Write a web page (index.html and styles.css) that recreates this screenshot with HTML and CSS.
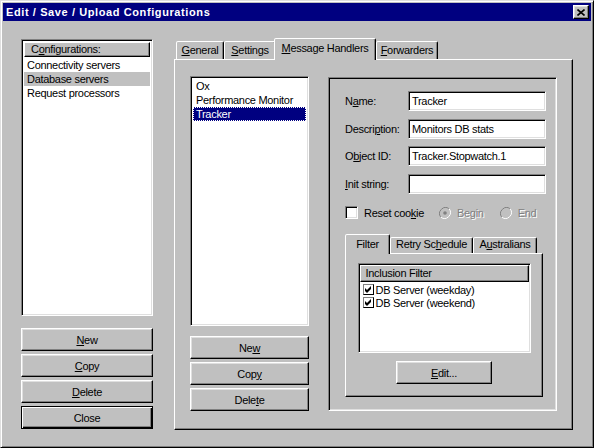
FILE: index.html
```html
<!DOCTYPE html>
<html>
<head>
<meta charset="utf-8">
<link rel="stylesheet" href="styles.css">
</head>
<body>
<div class="window">
  <div class="titlebar">
    <span class="title">Edit / Save / Upload Configurations</span>
    <div class="close"><svg width="8" height="7" viewBox="0 0 8 7"><path d="M0.5 0.5 L7.5 6.5 M7.5 0.5 L0.5 6.5" stroke="#000" stroke-width="1.6" fill="none"/></svg></div>
  </div>
  <div class="main">
    <div class="leftcol">
      <div class="listbox cfg">
        <div class="lb-header">C<u>o</u>nfigurations:</div>
        <div class="item first">Connectivity servers</div>
        <div class="item gray">Database servers</div>
        <div class="item">Request processors</div>
      </div>
      <div class="btncol leftbtns">
        <div class="btn"><span><u>N</u>ew</span></div>
        <div class="btn"><span><u>C</u>opy</span></div>
        <div class="btn"><span><u>D</u>elete</span></div>
        <div class="btn default"><span>Close</span></div>
      </div>
    </div>
    <div class="tabctl">
      <div class="tabs">
        <div class="tab w-general"><u>G</u>eneral</div>
        <div class="tab w-settings"><u>S</u>ettings</div>
        <div class="tab active w-mh"><u>M</u>essage Handlers</div>
        <div class="tab w-fw"><u>F</u>orwarders</div>
      </div>
      <div class="panel">
        <div class="midcol">
          <div class="listbox hlist">
            <div class="item">Ox</div>
            <div class="item">Performance Monitor</div>
            <div class="item sel">Tracker</div>
          </div>
          <div class="btncol midbtns">
            <div class="btn"><span>Ne<u>w</u></span></div>
            <div class="btn"><span>Cop<u>y</u></span></div>
            <div class="btn"><span>Dele<u>t</u>e</span></div>
          </div>
        </div>
        <div class="group">
          <div class="frow r1"><span class="flabel">N<u>a</u>me:</span><div class="field">Tracker</div></div>
          <div class="frow r2"><span class="flabel">Descri<u>p</u>tion:</span><div class="field">Monitors DB stats</div></div>
          <div class="frow r3"><span class="flabel">O<u>b</u>ject ID:</span><div class="field">Tracker.Stopwatch.1</div></div>
          <div class="frow r4"><span class="flabel"><u>I</u>nit string:</span><div class="field"></div></div>
          <div class="optrow">
            <div class="check"></div>
            <span class="optlabel">Reset coo<u>k</u>ie</span>
            <svg class="radio rbegin" width="12" height="12" viewBox="0 0 12 12"><path d="M10.2 1.8 A6 6 0 0 0 1.8 10.2" stroke="#808080" fill="none"/><path d="M1.8 10.2 A6 6 0 0 0 10.2 1.8" stroke="#fff" fill="none"/><circle cx="6" cy="6" r="4.5" fill="#c0c0c0"/><circle cx="6" cy="6" r="1.8" fill="#808080"/></svg>
            <span class="disabled">Begin</span>
            <svg class="radio rend" width="12" height="12" viewBox="0 0 12 12"><path d="M10.2 1.8 A6 6 0 0 0 1.8 10.2" stroke="#808080" fill="none"/><path d="M1.8 10.2 A6 6 0 0 0 10.2 1.8" stroke="#fff" fill="none"/><circle cx="6" cy="6" r="4.5" fill="#c0c0c0"/></svg>
            <span class="disabled">End</span>
          </div>
          <div class="subtabctl">
            <div class="stabs">
              <div class="stab active w-filter">Filter</div>
              <div class="stab w-retry">Retry Sc<u>h</u>edule</div>
              <div class="stab w-aus">A<u>u</u>stralians</div>
            </div>
            <div class="spanel">
              <div class="listview">
                <div class="lv-header">Inclusion Filter</div>
                <div class="lvrow first"><span class="lvcheck"><svg width="7" height="7" viewBox="0 0 7 7"><path d="M0 2 L2 4 L6 0 L6 3 L2 7 L0 5 Z" fill="#000"/></svg></span><span>DB Server (weekday)</span></div>
                <div class="lvrow"><span class="lvcheck"><svg width="7" height="7" viewBox="0 0 7 7"><path d="M0 2 L2 4 L6 0 L6 3 L2 7 L0 5 Z" fill="#000"/></svg></span><span>DB Server (weekend)</span></div>
              </div>
              <div class="btn editbtn"><span><u>E</u>dit...</span></div>
            </div>
          </div>
        </div>
      </div>
    </div>
  </div>
</div>
</body>
</html>
```
FILE: styles.css
```css
* { box-sizing: border-box; }
body {
  margin: 0;
  background: #c0c0c0;
  font-family: "Liberation Sans", Arial, sans-serif;
  font-size: 11px;
  letter-spacing: -0.3px;
  color: #000;
}
u { text-decoration: underline; text-underline-offset: 1px; }

.window {
  width: 594px;
  height: 448px;
  border: 1px solid;
  border-color: #dfdfdf #000 #000 #dfdfdf;
  box-shadow: inset 1px 1px #fff, inset -1px -1px #808080;
  padding: 2px;
  background: #c0c0c0;
}
.titlebar {
  height: 18px;
  background: #000080;
  display: flex;
  align-items: center;
  justify-content: space-between;
  padding: 0 2px 0 3px;
}
.title {
  color: #fff;
  font-weight: bold;
  letter-spacing: 0.6px;
}
.close {
  width: 16px;
  height: 14px;
  background: #c0c0c0;
  border: 1px solid;
  border-color: #fff #000 #000 #fff;
  box-shadow: inset -1px -1px #808080, inset 1px 1px #dfdfdf;
  display: flex;
  align-items: center;
  justify-content: center;
}
.close svg { display: block; }

.main {
  display: flex;
  padding: 17px 0 0 18px;
}
.leftcol {
  width: 132px;
  margin-top: 1px;
  display: flex;
  flex-direction: column;
}

.listbox {
  background: #fff;
  border: 1px solid;
  border-color: #808080 #fff #fff #808080;
  box-shadow: inset 1px 1px #000, inset -1px -1px #dfdfdf;
  padding: 2px;
}
.cfg { height: 277px; }
.lb-header {
  height: 15px;
  background: #c0c0c0;
  border: 1px solid;
  border-color: #fff #000 #000 #fff;
  box-shadow: inset -1px -1px #808080;
  padding-left: 6px;
  line-height: 12px;
}
.item {
  height: 14px;
  line-height: 14px;
  padding-left: 3px;
  white-space: nowrap;
}
.item.first { margin-top: 1px; }
.item.gray { background: #c0c0c0; }
.item.sel {
  background: #000080;
  color: #fff;
  outline: 1px dotted #fff;
  outline-offset: -1px;
}

.btncol {
  display: flex;
  flex-direction: column;
  gap: 3px;
}
.leftbtns { margin-top: 12px; }
.midbtns { margin-top: 10px; }
.btn {
  height: 23px;
  background: #c0c0c0;
  border: 1px solid;
  border-color: #fff #000 #000 #fff;
  box-shadow: inset -1px -1px #808080, inset 1px 1px #dfdfdf;
  display: flex;
  align-items: center;
  justify-content: center;
}
.btn.default {
  border-color: #000;
  box-shadow: inset 1px 1px #fff, inset -1px -1px #000, inset -2px -2px #808080;
}

/* main tab control */
.tabctl {
  margin-left: 21px;
  width: 399px;
  display: flex;
  flex-direction: column;
}
.tabs {
  display: flex;
  align-items: flex-end;
  height: 21px;
  padding-left: 2px;
  position: relative;
  z-index: 1;
}
.tab {
  height: 18px;
  border: 1px solid;
  border-bottom: 0;
  border-color: #fff #000 transparent #fff;
  box-shadow: inset -1px 0 #808080;
  border-radius: 2px 2px 0 0;
  text-align: center;
  line-height: 14px;
  padding-top: 1px;
  background: #c0c0c0;
  white-space: nowrap;
}
.tab.active {
  height: 22px;
  margin-left: -2px;
  margin-bottom: -1px;
  padding-top: 2px;
}
.w-general { width: 48px; }
.w-settings { width: 52px; }
.w-mh { width: 102px; }
.w-fw { width: 62px; }

.panel {
  height: 371px;
  border: 1px solid;
  border-color: #fff #000 #000 #fff;
  box-shadow: inset -1px -1px #808080;
  display: flex;
  padding: 16px 0 0 15px;
}
.midcol {
  width: 119px;
  display: flex;
  flex-direction: column;
}
.hlist { height: 250px; }

.group {
  margin-left: 19px;
  margin-top: 1px;
  width: 229px;
  height: 334px;
  border: 1px solid;
  border-color: #808080 #fff #fff #808080;
  box-shadow: inset 1px 1px #000, inset -1px -1px #dfdfdf;
  padding: 13px 0 0 16px;
}
.frow {
  display: flex;
  align-items: center;
  height: 20px;
}
.r2, .r4 { margin-top: 8px; }
.r3 { margin-top: 7px; }
.flabel { width: 63px; white-space: nowrap; }
.field {
  width: 138px;
  height: 20px;
  background: #fff;
  border: 1px solid;
  border-color: #808080 #fff #fff #808080;
  box-shadow: inset 1px 1px #000, inset -1px -1px #dfdfdf;
  padding: 0 3px;
  line-height: 18px;
  white-space: nowrap;
}

.optrow {
  display: flex;
  align-items: center;
  height: 13px;
  margin-top: 12px;
}
.check {
  width: 13px;
  height: 13px;
  background: #fff;
  border: 1px solid;
  border-color: #808080 #fff #fff #808080;
  box-shadow: inset 1px 1px #000, inset -1px -1px #dfdfdf;
}
.optlabel { margin-left: 6px; }
.radio { display: block; flex: none; }
.rbegin { margin-left: 15px; }
.rend { margin-left: 16px; }
.disabled {
  color: #808080;
  text-shadow: 1px 1px #fff;
  margin-left: 6px;
}

/* sub tab control */
.subtabctl {
  margin-top: 15px;
  width: 198px;
  display: flex;
  flex-direction: column;
}
.stabs {
  display: flex;
  align-items: flex-end;
  height: 19px;
  position: relative;
  z-index: 1;
}
.stab {
  height: 16px;
  border: 1px solid;
  border-bottom: 0;
  border-color: #fff #000 transparent #fff;
  box-shadow: inset -1px 0 #808080;
  border-radius: 2px 2px 0 0;
  text-align: center;
  line-height: 13px;
  background: #c0c0c0;
  white-space: nowrap;
}
.stab.active {
  height: 20px;
  margin-bottom: -1px;
  padding-top: 3px;
}
.w-filter { width: 45px; }
.w-retry { width: 83px; }
.w-aus { width: 64px; }

.spanel {
  height: 144px;
  border: 1px solid;
  border-color: #fff #000 #000 #fff;
  box-shadow: inset -1px -1px #808080;
  display: flex;
  flex-direction: column;
  align-items: center;
  padding: 9px 11px 0 11px;
}
.listview {
  width: 173px;
  height: 90px;
  background: #fff;
  border: 1px solid;
  border-color: #808080 #fff #fff #808080;
  box-shadow: inset 1px 1px #000, inset -1px -1px #dfdfdf;
  padding: 1px;
}
.lv-header {
  height: 17px;
  background: #c0c0c0;
  border: 1px solid;
  border-color: #fff #000 #000 #fff;
  box-shadow: inset -1px -1px #808080;
  padding-left: 5px;
  line-height: 15px;
}
.lvrow {
  display: flex;
  align-items: center;
  height: 13px;
  padding-left: 3px;
  white-space: nowrap;
}
.lvrow.first { margin-top: 1px; }
.lvcheck {
  width: 11px;
  height: 11px;
  border: 1px solid;
  border-color: #808080 #000 #000 #808080;
  background: #fff;
  display: flex;
  align-items: center;
  justify-content: center;
  margin-right: 2px;
}
.lvcheck svg { display: block; }
.editbtn {
  width: 96px;
  margin-top: 8px;
}
```
